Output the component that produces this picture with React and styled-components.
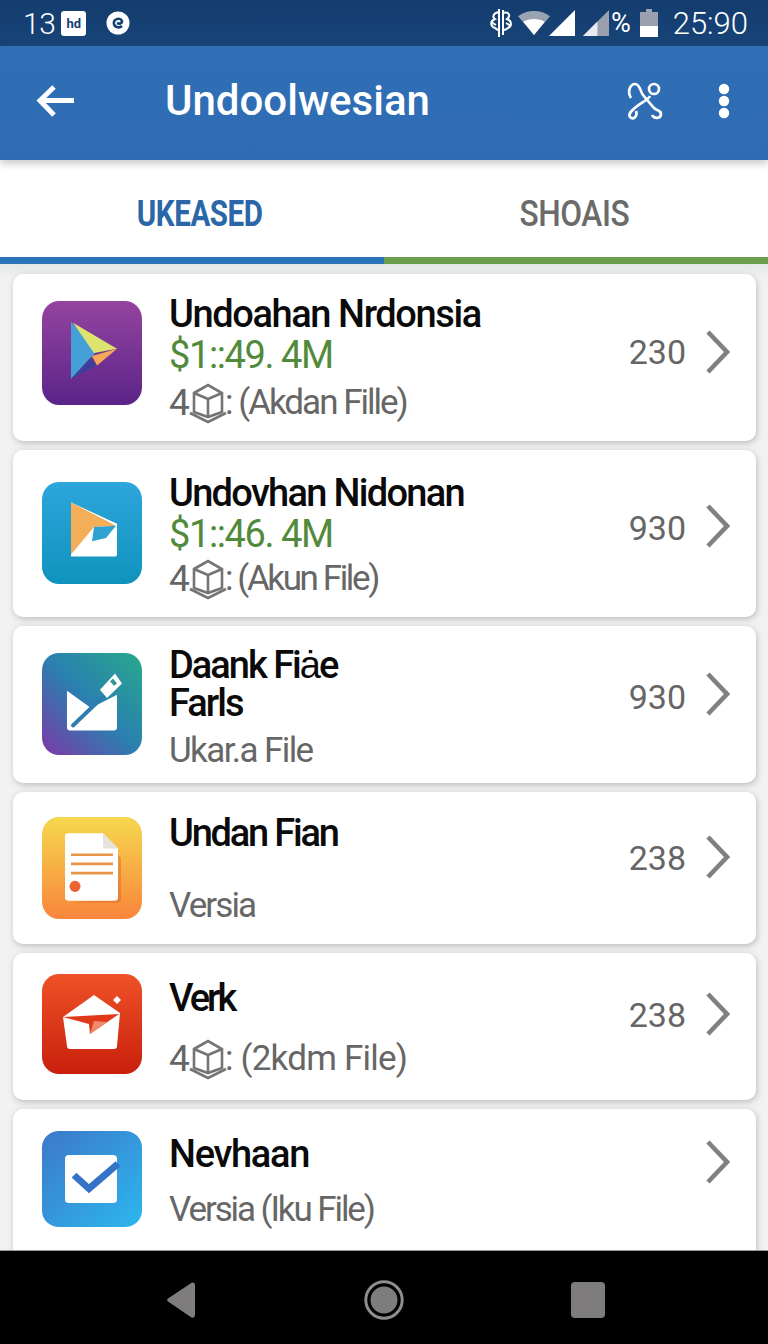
import React from "react";
import styled, { createGlobalStyle } from "styled-components";

const Global = createGlobalStyle`
  *, *::before, *::after { box-sizing: border-box; }
  html, body { margin: 0; padding: 0; background: #f1f2f1; }
  body { font-family: Roboto, "Liberation Sans", sans-serif; }
`;

const Phone = styled.div`
  width: 768px;
  height: 1344px;
  display: flex;
  flex-direction: column;
  overflow: hidden;
  background: #f1f2f1;
`;

const StatusBar = styled.div`
  height: 46px;
  flex: none;
  display: flex;
  align-items: center;
  justify-content: space-between;
  padding: 0 20px 0 23px;
  background: linear-gradient(180deg, #143c6e, #174478);
  color: #fff;
  font-size: 30px;
  font-weight: 300;
`;

const StatusGroup = styled.div`
  display: flex;
  align-items: center;
  letter-spacing: -0.5px;
`;

const Badge = styled.span`
  width: 25px;
  height: 25px;
  margin-left: 6px;
  border-radius: 3px;
  background: #fff;
  color: #153f72;
  font-size: 13px;
  font-weight: 700;
  letter-spacing: 0;
  display: flex;
  align-items: center;
  justify-content: center;
`;

const Percent = styled.span`
  font-size: 27px;
  font-weight: 400;
  margin: 0 10px 0 2px;
  letter-spacing: -1px;
`;

const Clock = styled.span`
  margin-left: 15px;
  font-size: 31px;
  letter-spacing: 0;
`;

const AppBar = styled.header`
  height: 114px;
  flex: none;
  display: flex;
  align-items: center;
  padding: 0 37px 5px 36px;
  background: linear-gradient(180deg, #2f6fb6, #2f6bb2);
  color: #fff;
  position: relative;
  z-index: 2;
  box-shadow: 0 3px 8px rgba(60, 60, 60, 0.3);
`;

const AppTitle = styled.h1`
  margin: 0 0 0 91px;
  flex: 1;
  font-size: 42px;
  font-weight: 500;
  letter-spacing: 0;
`;

const Tabs = styled.nav`
  height: 104px;
  flex: none;
  display: flex;
  background: #fff;
`;

const Tab = styled.div`
  flex: 0 0 384px;
  display: flex;
  align-items: center;
  justify-content: center;
  padding: 11px ${(p) => (p.$active ? 0 : 4)}px 0 ${(p) => (p.$active ? 15 : 0)}px;
  color: ${(p) => (p.$active ? "#2a66a8" : "#6b6b6b")};
  border-bottom: 7px solid ${(p) => (p.$active ? "#2c74b9" : "#6a9f4b")};
`;

const TabLabel = styled.span`
  display: inline-block;
  font-size: 36px;
  letter-spacing: -0.5px;
  font-weight: ${(p) => (p.$active ? 700 : 500)};
  transform: scaleX(${(p) => (p.$active ? 0.82 : 0.88)});
`;

const List = styled.main`
  flex: 1;
  min-height: 0;
  display: flex;
  flex-direction: column;
  gap: 9px;
  padding: 10px 12px 0 13px;
  overflow: hidden;
  background: linear-gradient(180deg, #e6e8e8 0, #f1f2f1 14px);
`;

const Card = styled.article`
  flex: none;
  height: ${(p) => p.$h}px;
  display: grid;
  grid-template-columns: 100px 1fr auto 24px;
  column-gap: 28px;
  padding: 0 26px 0 29px;
  border-radius: 10px;
  background: #fff;
  box-shadow: 1px 2px 6px rgba(90, 90, 90, 0.35);
`;

const AppIcon = styled.svg`
  width: 100px;
  height: ${(p) => p.$size}px;
  margin-top: ${(p) => p.$top}px;
  display: block;
`;

const Info = styled.div`
  display: flex;
  flex-direction: column;
  margin-left: -1px;
  padding-top: ${(p) => p.$top}px;
  gap: ${(p) => p.$gap}px;
`;

const Name = styled.div`
  font-size: 38px;
  line-height: 38px;
  font-weight: 500;
  color: #0a0a0a;
  letter-spacing: ${(p) => p.$tight}px;
  white-space: pre-line;
`;

const Price = styled.div`
  font-size: 38px;
  line-height: 38px;
  margin-bottom: ${(p) => p.$after}px;
  color: #528a3c;
  letter-spacing: -1.4px;
`;

const Meta = styled.div`
  display: flex;
  align-items: center;
  font-size: 35px;
  line-height: 38px;
  color: #666;
  letter-spacing: ${(p) => p.$tight}px;
`;

const Four = styled.span`
  font-size: 37px;
  letter-spacing: 0;
  width: 19px;
`;

const Count = styled.div`
  align-self: start;
  margin-top: ${(p) => p.$top}px;
  margin-right: -8px;
  font-size: 34px;
  line-height: 40px;
  color: #666;
`;

const Chevron = styled.svg`
  align-self: start;
  margin-top: ${(p) => p.$top}px;
  width: 24px;
  height: 44px;
`;

const NavBar = styled.footer`
  height: 94px;
  flex: none;
  position: relative;
  z-index: 2;
  display: flex;
  align-items: center;
  justify-content: space-between;
  padding: 5px 163px 0 167px;
  background: #000;
  border-top: 1px solid #999;
`;

const BackIcon = () => (
  <svg width="38" height="34" viewBox="0 0 38 34" fill="none" stroke="#fff" strokeWidth="5">
    <path d="M38 16.5H5M18 3L4 16.5 18 31" />
  </svg>
);

const LinkIcon = () => (
  <svg width="36" height="38" viewBox="0 0 36 38" fill="none" stroke="#fff" strokeWidth="2.7" style={{ marginRight: 54 }}>
    <circle cx="27" cy="7" r="5" />
    <path d="M4 16C0 10 3 2 8 2c5 0 5 7 8 11l11 13c3 3 7 2 7 6 0 5-7 5-9 1" />
    <path d="M23 14c-2 4-8 6-14 11-5 4-8 7-6 10 3 3 8 0 6-6" />
  </svg>
);

const DotsIcon = () => (
  <svg width="14" height="36" viewBox="0 0 14 36" fill="#fff">
    <circle cx="7" cy="6" r="5.2" />
    <circle cx="7" cy="18" r="5.2" />
    <circle cx="7" cy="30" r="5.2" />
  </svg>
);

const Cube = () => (
  <svg width="40" height="44" viewBox="0 0 40 42" fill="none" stroke="#757575" strokeWidth="2.6" style={{ marginRight: -3 }}>
    <path d="M6 11L20 3l14 8v19l-14 5-14-5z" />
    <path d="M6 11l14 6 14-6M20 17v18" />
    <path d="M2 31l18 9 18-9" />
  </svg>
);

const Squiggle = () => (
  <svg width="24" height="30" viewBox="0 0 24 30" fill="none" stroke="#fff" strokeWidth="2" style={{ marginRight: 4 }}>
    <path d="M10 1v28M14 2v25" />
    <path d="M10 4C4 5 3 9 6 11c-5 2-5 7 0 9 1 1 3 2 4 2" />
    <path d="M14 5c6-2 8 3 4 6 5 2 5 7 1 9-1 1-3 2-5 2" />
    <path d="M2 14l5 3M22 18l-5-3" />
  </svg>
);

const Wifi = () => (
  <svg width="34" height="24" viewBox="0 0 36 27">
    <path d="M0 6C10-2 26-2 36 6L18 27z" fill="#9aa3b2" />
    <path d="M6 12c7-4 17-4 24 0L18 27z" fill="#fff" />
  </svg>
);

const Signal = ({ empty }) => (
  <svg width="26" height="26" viewBox="0 0 27 27" style={{ marginLeft: empty ? 8 : -2 }}>
    <path d="M27 0v27H0z" fill={empty ? "#9aa0ae" : "#fff"} />
    {empty && <path d="M15 12v15H0z" fill="#e8ebef" />}
  </svg>
);

const Battery = () => (
  <svg width="18" height="28" viewBox="0 0 18 28">
    <path d="M6 0h6v3h6v25H0V3h6z" fill="#9aa0ae" />
    <path d="M0 17h18v11H0z" fill="#fff" />
  </svg>
);

const Sync = () => (
  <svg width="24" height="24" viewBox="0 0 24 24" style={{ marginLeft: 20 }}>
    <circle cx="12" cy="12" r="11.5" fill="#fff" />
    <path d="M16 15c-2 2-7 2-8-2-1-5 6-7 8-3 0 3-3 3-5 2" fill="none" stroke="#153f72" strokeWidth="2.6" />
  </svg>
);

const Defs = ({ id, from, to, vertical }) => (
  <defs>
    <linearGradient id={id} x1="0" y1="0" x2={vertical ? 0 : 1} y2="1">
      <stop offset="0" stopColor={from} />
      <stop offset="1" stopColor={to} />
    </linearGradient>
  </defs>
);

const tile = (id) => <rect width="100" height="100" rx="17" fill={`url(#${id})`} />;

const PlayIcon = () => (
  <AppIcon $size={104} $top={27} viewBox="0 0 100 100" preserveAspectRatio="none">
    <Defs id="a1" from="#94449f" to="#5b2489" vertical />
    {tile("a1")}
    <path d="M29 20L55 48 29 75z" fill="#45a0d8" />
    <path d="M31 21L75 46 52 50z" fill="#dce46e" />
    <path d="M75 46L50 53 55 62z" fill="#f3a85a" />
    <path d="M29 75L48 55 55 62z" fill="#3f3f9b" />
  </AppIcon>
);

const MailIcon = () => (
  <AppIcon $size={102} $top={32} viewBox="0 0 100 100" preserveAspectRatio="none">
    <Defs id="a2" from="#2ea6dc" to="#0f93bd" vertical />
    {tile("a2")}
    <path d="M29 20L75 41V71a2 2 0 0 1-2 2H29z" fill="#fff" />
    <path d="M29 20L74 43 52 44 29 71z" fill="#f5ae58" />
    <path d="M52 44L74 43 64 55 50 58z" fill="#2ea3d3" />
  </AppIcon>
);

const PenIcon = () => (
  <AppIcon $size={102} $top={27} viewBox="0 0 100 100" preserveAspectRatio="none">
    <defs>
      <linearGradient id="a3" x1="1" y1="0" x2="0" y2="1">
        <stop offset="0" stopColor="#27a98b" />
        <stop offset="0.5" stopColor="#2a80b0" />
        <stop offset="1" stopColor="#7d38a8" />
      </linearGradient>
    </defs>
    <rect width="100" height="100" rx="17" fill="url(#a3)" />
    <path d="M25 37L49 54 75 41V73a3 3 0 0 1-3 3H28a3 3 0 0 1-3-3z" fill="#fff" />
    <path d="M31 71L62 42" stroke="#2e7db0" strokeWidth="4" strokeLinecap="round" />
    <path d="M58 36L73 20 80 30 65 44z" fill="#fff" />
    <path d="M71 25l4 5-3 2-4-4z" fill="#2e9b8f" />
  </AppIcon>
);

const DocIcon = () => (
  <AppIcon $size={102} $top={25} viewBox="0 0 100 100" preserveAspectRatio="none">
    <Defs id="a4" from="#f5d84d" to="#f9853c" vertical />
    {tile("a4")}
    <path d="M30 84H76a3 3 0 0 0 3-3V40l-3-3v42z" fill="#d9662a" opacity="0.45" />
    <path d="M26 16H61L76 31V79a3 3 0 0 1-3 3H26a3 3 0 0 1-3-3V19a3 3 0 0 1 3-3z" fill="#fff" />
    <path d="M61 16L76 31H61z" fill="#e4e2dc" />
    <path d="M29 37H71M29 46H71M29 55H71" stroke="#e8954a" strokeWidth="2.6" />
    <circle cx="33" cy="68" r="5.5" fill="#ec6431" />
  </AppIcon>
);

const EnvelopeIcon = () => (
  <AppIcon $size={100} $top={21} viewBox="0 0 100 100" preserveAspectRatio="none">
    <Defs id="a5" from="#ee5227" to="#c9200c" vertical />
    {tile("a5")}
    <path d="M21 43L52 21 78 39 75 72a3 3 0 0 1-3 3H28a3 3 0 0 1-3-3z" fill="#fff" />
    <path d="M21 43L77 40 48 60 47 50z" fill="#e0391a" />
    <path d="M52 47L65 48 48 60z" fill="#f08a6d" />
    <path d="M71 26l4-4 4 4-4 4z" fill="#fff" />
  </AppIcon>
);

const CheckIcon = () => (
  <AppIcon $size={96} $top={22} viewBox="0 0 100 100" preserveAspectRatio="none">
    <Defs id="a6" from="#3d78c9" to="#2cb7ee" />
    {tile("a6")}
    <rect x="23" y="25" width="52" height="50" rx="4" fill="#fff" />
    <path d="M32 46L47 60 76 34" fill="none" stroke="#3473c8" strokeWidth="7" />
  </AppIcon>
);

const rows = [
  { h: 167, Icon: PlayIcon, top: 21, gap: 3, after: 4, tight: -1.4, metaTight: -2, name: "Undoahan Nrdonsia", price: "$1::49. 4M", cube: true, meta: ": (Akdan Fille)", count: "230", countTop: 58, chevTop: 56 },
  { h: 167, Icon: MailIcon, top: 24, gap: 3, after: 1, tight: -1.7, metaTight: -2.4, name: "Undovhan Nidonan", price: "$1::46. 4M", cube: true, meta: ": (Akun File)", count: "930", countTop: 58, chevTop: 54 },
  { h: 157, Icon: PenIcon, top: 20, gap: 10, tight: -2, metaTight: -1.6, name: "Daank Fiȧe\nFarls", meta: "Ukar.a File", count: "930", countTop: 51, chevTop: 46 },
  { h: 152, Icon: DocIcon, top: 22, gap: 35, tight: -2.2, metaTight: -1.9, name: "Undan Fian", meta: "Versia", count: "238", countTop: 46, chevTop: 43 },
  { h: 147, Icon: EnvelopeIcon, top: 26, gap: 20, tight: -3, metaTight: -0.8, name: "Verk", cube: true, meta: ": (2kdm File)", count: "238", countTop: 42, chevTop: 39 },
  { h: 160, Icon: CheckIcon, top: 26, gap: 18, tight: -1.3, metaTight: -2.1, name: "Nevhaan", meta: "Versia (Iku File)", chevTop: 31 },
];

export default function App() {
  return (
    <Phone>
      <Global />
      <StatusBar>
        <StatusGroup>
          13
          <Badge>hd</Badge>
          <Sync />
        </StatusGroup>
        <StatusGroup>
          <Squiggle />
          <Wifi />
          <Signal />
          <Signal empty />
          <Percent>%</Percent>
          <Battery />
          <Clock>25:90</Clock>
        </StatusGroup>
      </StatusBar>
      <AppBar>
        <BackIcon />
        <AppTitle>Undoolwesian</AppTitle>
        <LinkIcon />
        <DotsIcon />
      </AppBar>
      <Tabs>
        <Tab $active>
          <TabLabel $active>UKEASED</TabLabel>
        </Tab>
        <Tab>
          <TabLabel>SHOAIS</TabLabel>
        </Tab>
      </Tabs>
      <List>
        {rows.map((r) => (
          <Card key={r.name} $h={r.h}>
            <r.Icon />
            <Info $top={r.top} $gap={r.gap}>
              <Name $tight={r.tight}>{r.name}</Name>
              {r.price && <Price $after={r.after}>{r.price}</Price>}
              <Meta $tight={r.metaTight}>
                {r.cube && <Four>4</Four>}
                {r.cube && <Cube />}
                {r.meta}
              </Meta>
            </Info>
            <Count $top={r.countTop}>{r.count}</Count>
            <Chevron $top={r.chevTop} viewBox="0 0 24 44" fill="none" stroke="#808080" strokeWidth="4.6">
              <path d="M2 2l19 20L2 42" />
            </Chevron>
          </Card>
        ))}
      </List>
      <NavBar>
        <svg width="30" height="38" viewBox="0 0 30 38">
          <path d="M25 1.500a2.500 2.500 0 0 1 3 2.500v30a2.500 2.500 0 0 1-3.500 2.500L1 20.500a2 2 0 0 1 0-3z" fill="#7e7c7c" />
        </svg>
        <svg width="40" height="40" viewBox="0 0 40 40">
          <circle cx="20" cy="20" r="18.200" fill="none" stroke="#8e8c8c" strokeWidth="3" />
          <circle cx="20" cy="20" r="13.500" fill="#7e7c7c" />
        </svg>
        <svg width="34" height="36" viewBox="0 0 34 36">
          <rect width="34" height="36" rx="4" fill="#7e7c7c" />
        </svg>
      </NavBar>
    </Phone>
  );
}
